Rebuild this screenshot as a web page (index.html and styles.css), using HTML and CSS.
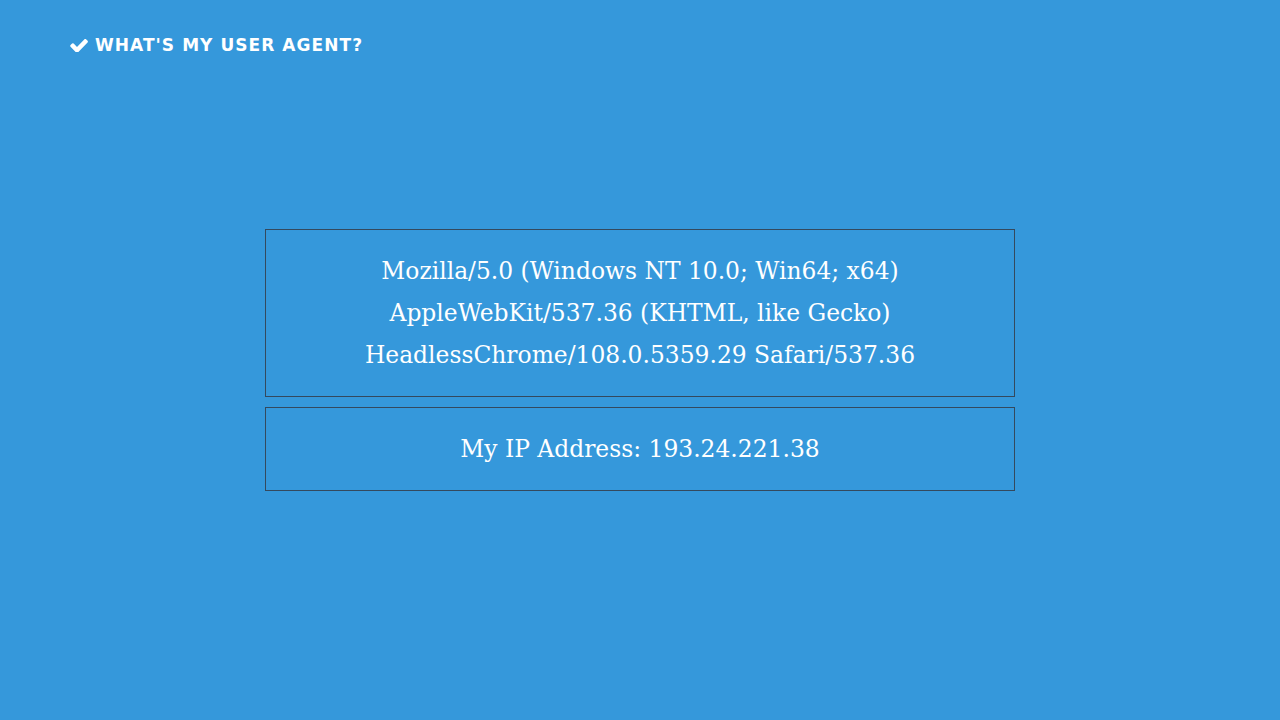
FILE: index.html
```html
<!DOCTYPE html>
<html>
<head>
<meta charset="utf-8">
<link rel="stylesheet" href="styles.css">
</head>
<body>
<header class="top">
  <svg class="check" viewBox="100 350 1580 1090" width="18" height="13" preserveAspectRatio="none"><path fill="#fff" d="M1671 566q0 40-28 68l-724 724-136 136q-28 28-68 28t-68-28l-136-136-362-362q-28-28-28-68t28-68l136-136q28-28 68-28t68 28l294 295 656-657q28-28 68-28t68 28l136 136q28 28 28 68z"/></svg>
  <span class="title">WHAT'S MY USER AGENT?</span>
</header>
<main class="content">
  <div class="box">Mozilla/5.0 (Windows NT 10.0; Win64; x64)<br>AppleWebKit/537.36 (KHTML, like Gecko)<br>HeadlessChrome/108.0.5359.29 Safari/537.36</div>
  <div class="box">My IP Address: 193.24.221.38</div>
</main>
</body>
</html>
```
FILE: styles.css
```css
html, body {
  margin: 0;
  padding: 0;
  background: #3598db;
  height: 100%;
}
body {
  color: #fff;
}
.top {
  display: flex;
  align-items: center;
  gap: 7px;
  padding: 35px 0 0 70px;
  height: 20px;
}
.check {
  display: block;
}
.title {
  font-family: "DejaVu Sans", "Open Sans", sans-serif;
  font-weight: 700;
  font-size: 17px;
  letter-spacing: 1.05px;
}
.content {
  width: 750px;
  margin: 174px auto 0;
  display: flex;
  flex-direction: column;
  gap: 10px;
}
.box {
  border: 1px solid #34495e;
  padding: 20px;
  text-align: center;
  font-family: "DejaVu Serif", serif;
  font-size: 23.4px;
  line-height: 42px;
}
```
